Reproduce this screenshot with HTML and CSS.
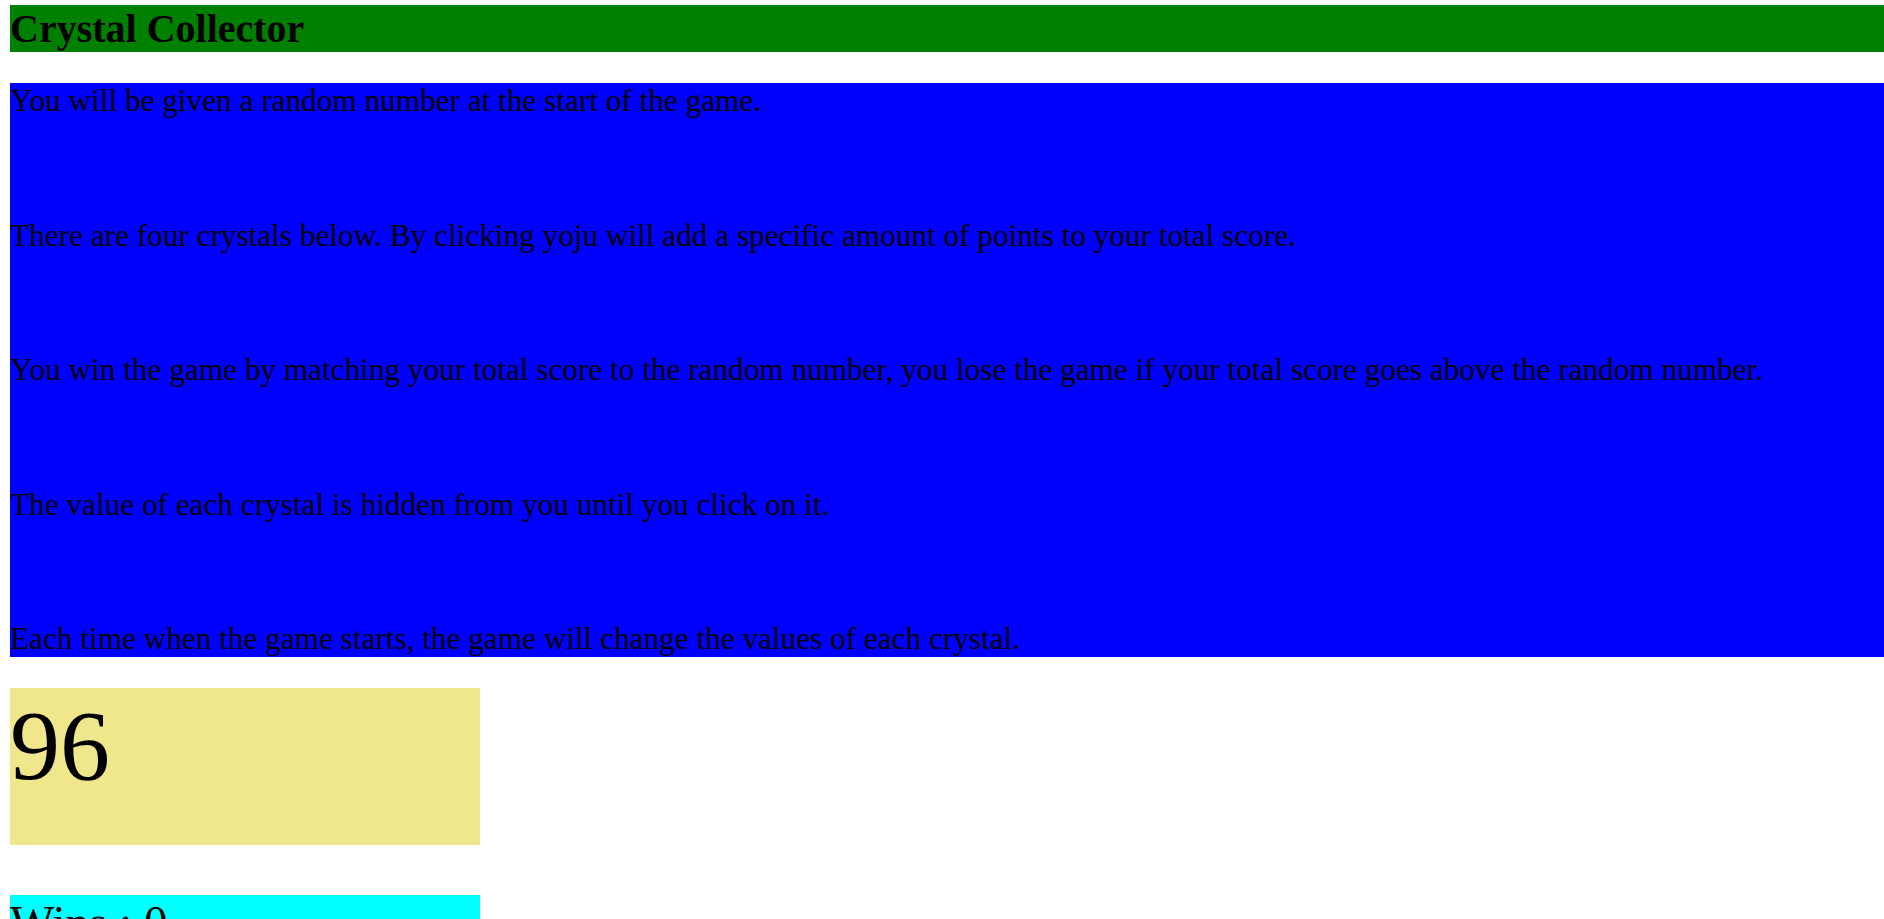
FILE: index.html
```html
<!DOCTYPE html>
<html lang="en">
<head>
<meta charset="utf-8">
<title>Crystal Collector</title>
<link rel="stylesheet" href="styles.css">
</head>
<body>
<h1 class="title">Crystal Collector</h1>
<div class="instructions">
  <p class="rule">You will be given a random number at the start of the game.</p>
  <p class="rule">There are four crystals below. By clicking yoju will add a specific amount of points to your total score.</p>
  <p class="rule">You win the game by matching your total score to the random number, you lose the game if your total score goes above the random number.</p>
  <p class="rule">The value of each crystal is hidden from you until you click on it.</p>
  <p class="rule">Each time when the game starts, the game will change the values of each crystal.</p>
</div>
<div class="target">96</div>
<div class="wins">Wins : 0</div>
</body>
</html>
```
FILE: styles.css
```css
html, body {
  margin: 0;
  padding: 0;
}
body {
  padding: 5px 0 0 10px;
  font-family: "Liberation Serif", "Times New Roman", serif;
  color: #000;
  background: #fff;
}
.title {
  margin: 0;
  background: #008000;
  font-size: 40px;
  font-weight: bold;
  line-height: 47px;
  height: 47px;
}
.instructions {
  margin-top: 31px;
  background: #0000ff;
  height: 574px;
  display: flex;
  flex-direction: column;
  justify-content: space-between;
}
.rule {
  margin: 0;
  font-size: 31.25px;
  line-height: 36px;
}
.target {
  margin-top: 31px;
  width: 470px;
  height: 157px;
  background: #f0e68c;
  font-size: 100px;
  line-height: 115px;
}
.wins {
  margin-top: 50px;
  width: 470px;
  height: 157px;
  background: #00ffff;
  font-size: 47px;
  line-height: 55px;
}
```
